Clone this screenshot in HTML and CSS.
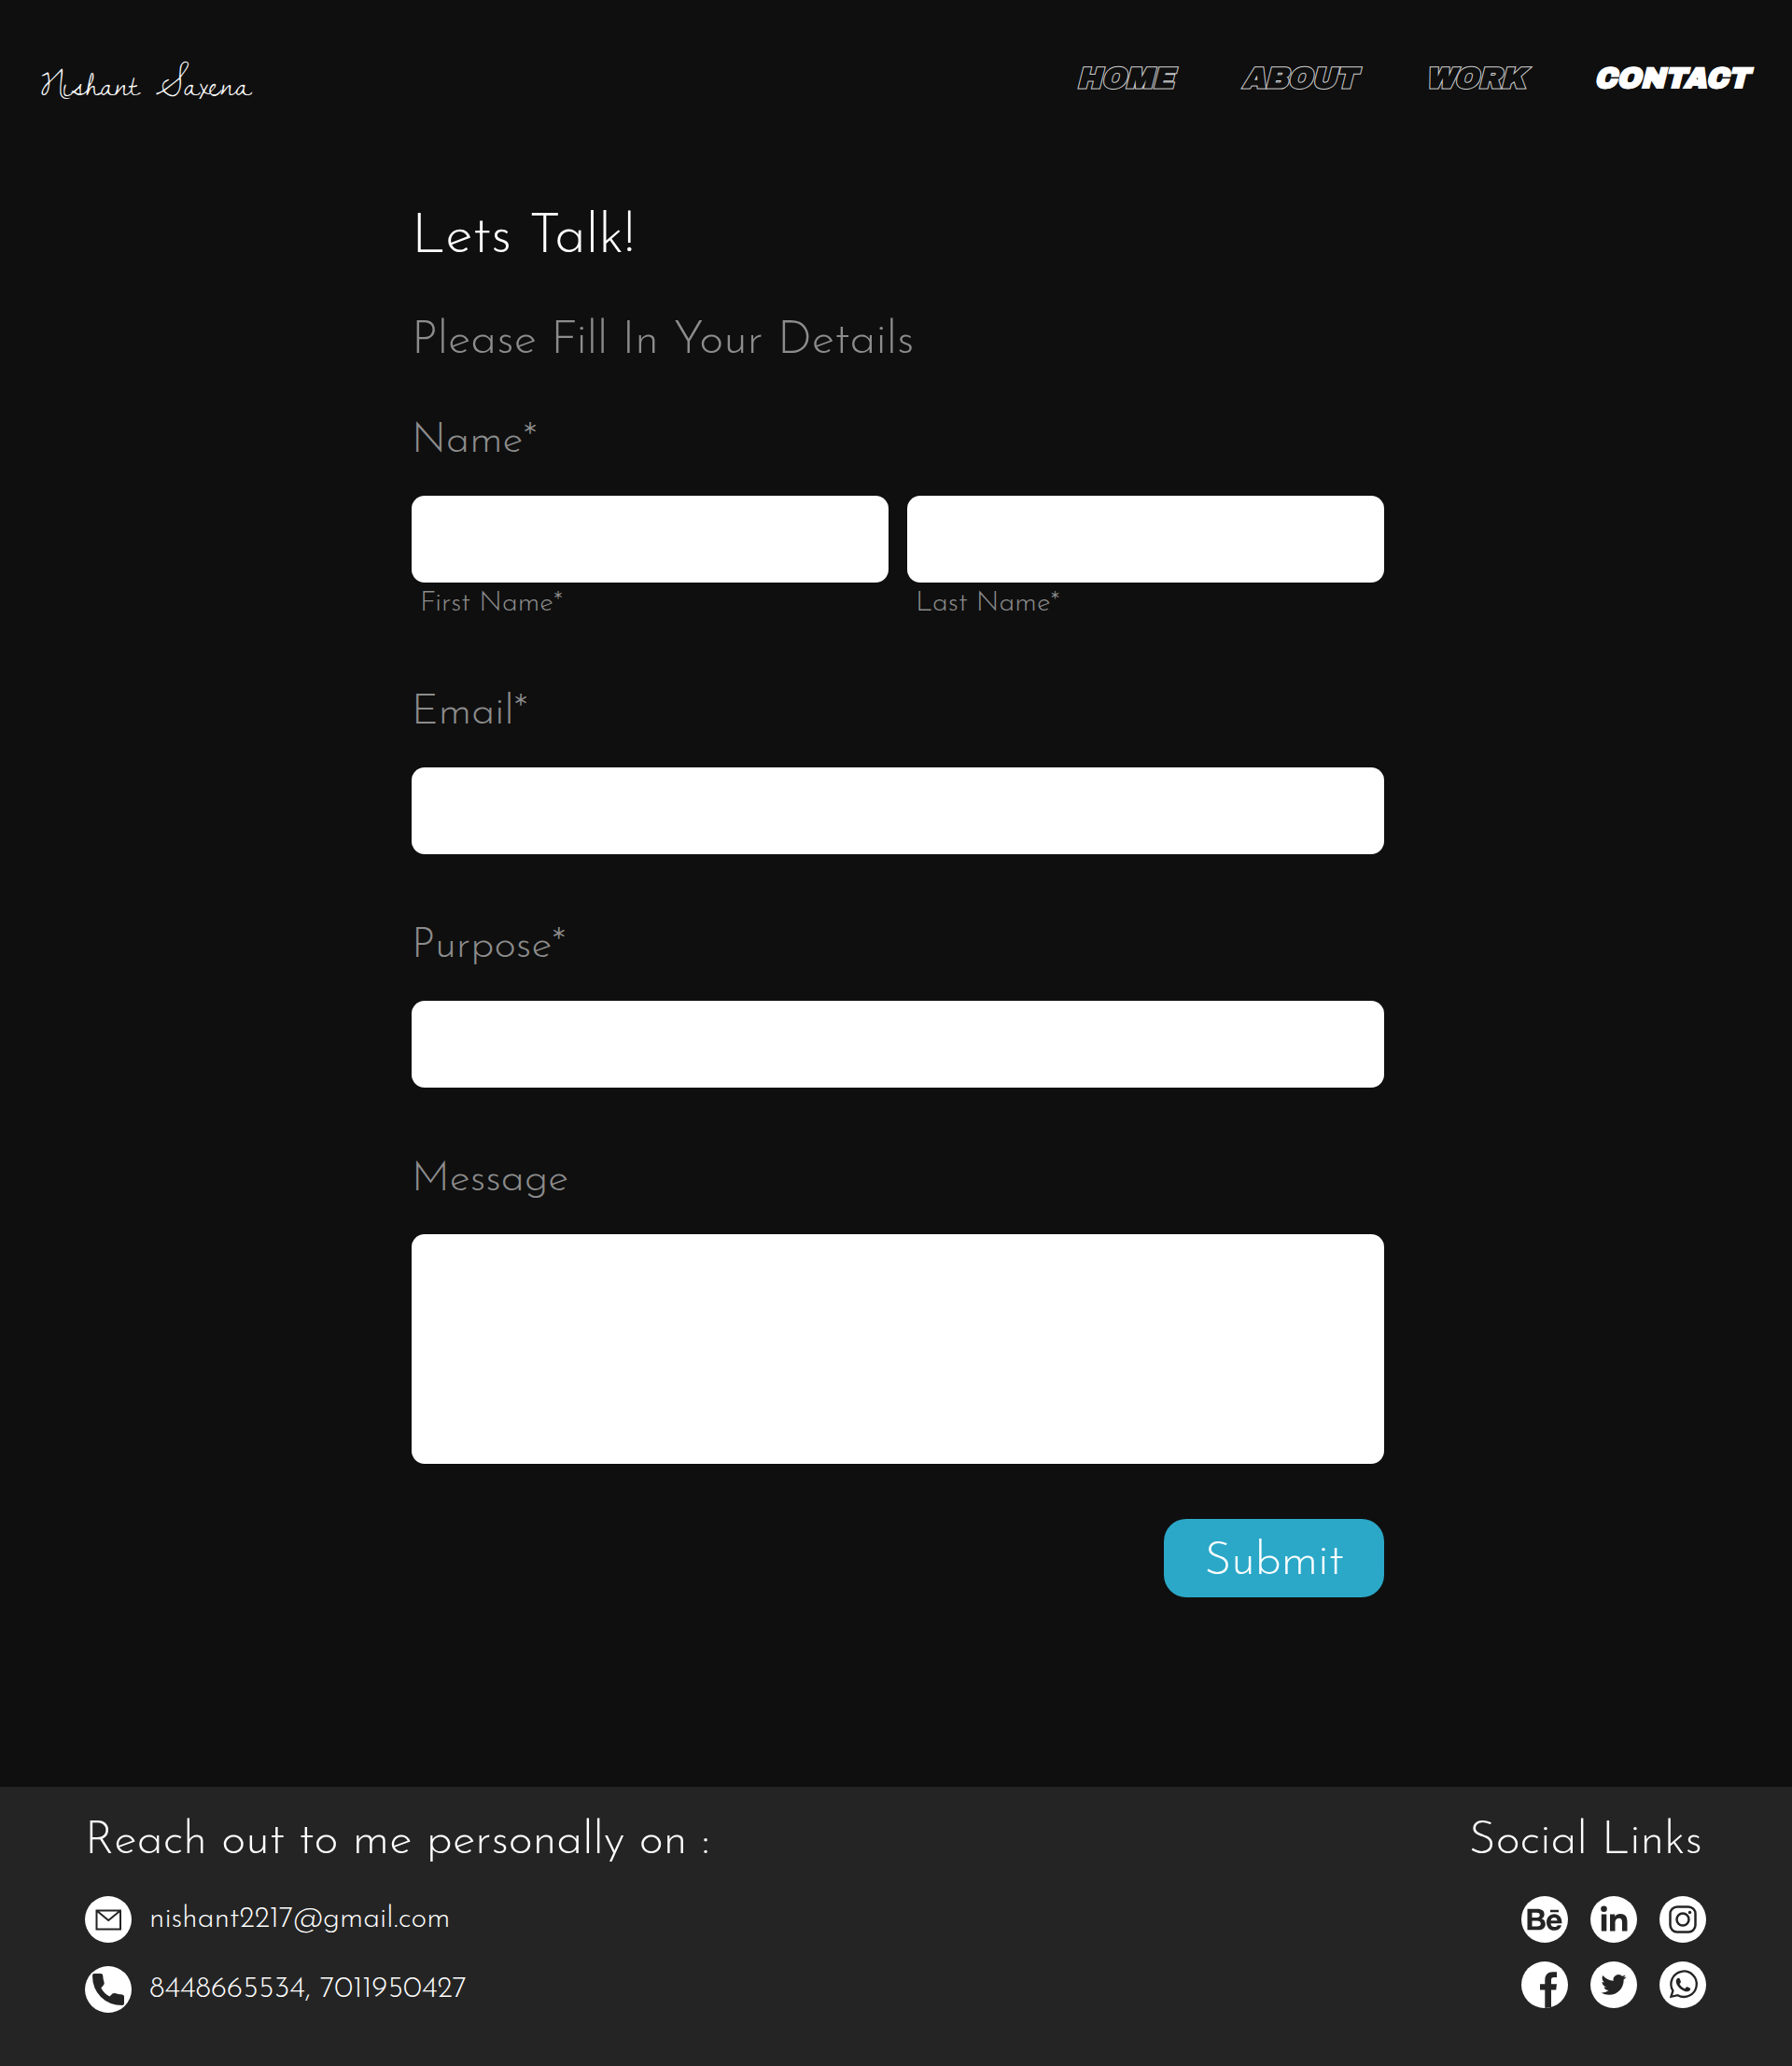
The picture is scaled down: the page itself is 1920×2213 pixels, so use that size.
FILE: index.html
```html
<!DOCTYPE html>
<html lang="en">
<head>
  <meta charset="utf-8">
  <meta name="viewport" content="width=device-width, initial-scale=1">
  <title>Contact – Nishant Saxena</title>
  <link rel="stylesheet" href="styles.css">
</head>
<body>
  <header class="site-header">
    <a class="logo" href="#">Nishant Saxena</a>
    <nav class="nav" aria-label="Main">
      <a class="nav-link" href="#">HOME</a>
      <a class="nav-link" href="#">ABOUT</a>
      <a class="nav-link" href="#">WORK</a>
      <a class="nav-link active" href="#" aria-current="page">CONTACT</a>
    </nav>
  </header>

  <main class="contact">
    <h1 class="title">Lets Talk!</h1>
    <h2 class="subtitle">Please Fill In Your Details</h2>
    <form class="form">
      <fieldset class="field">
        <legend class="label">Name*</legend>
        <div class="name-row">
          <div class="name-part">
            <input class="input" id="first" type="text">
            <label class="hint" for="first">First Name*</label>
          </div>
          <div class="name-part">
            <input class="input" id="last" type="text">
            <label class="hint" for="last">Last Name*</label>
          </div>
        </div>
      </fieldset>
      <div class="field">
        <label class="label" for="email">Email*</label>
        <input class="input" id="email" type="email">
      </div>
      <div class="field">
        <label class="label" for="purpose">Purpose*</label>
        <input class="input" id="purpose" type="text">
      </div>
      <div class="field">
        <label class="label" for="message">Message</label>
        <textarea class="input message" id="message"></textarea>
      </div>
      <button class="submit" type="submit">Submit</button>
    </form>
  </main>

  <footer class="footer">
    <section>
      <h2 class="footer-title">Reach out to me personally on :</h2>
      <ul class="contact-list">
        <li>
          <a class="contact-link" href="mailto:nishant2217@gmail.com">
            <svg class="icon" viewBox="0 0 50 50" aria-hidden="true">
              <circle cx="25" cy="25" r="25" fill="#fff"/>
              <path d="M12.500 15.500H38V35.500H12.500ZM12.500 15.500L25.200 26L38 15.500" fill="none" stroke="#242424" stroke-width="2"/>
            </svg>
            nishant2217@gmail.com
          </a>
        </li>
        <li>
          <a class="contact-link" href="tel:8448665534">
            <svg class="icon" viewBox="0 0 50 50" aria-hidden="true">
              <circle cx="25" cy="25" r="25" fill="#fff"/>
              <path d="M8 10Q8 8 10 8H17Q19 8 19.200 10Q19.400 14 20.600 17.500Q21 19 20 20.200L17.300 23.500Q20.500 29.500 26.500 32.500L29.500 29.500Q30.700 28.600 32 29Q36 30.400 40 30.400Q42 30.600 42 32.500V40Q42 42 40 42Q26 42 17 33Q8 24 8 10Z" fill="#242424"/>
            </svg>
            8448665534, 7011950427
          </a>
        </li>
      </ul>
    </section>

    <section class="social">
      <h2 class="footer-title">Social Links</h2>
      <div class="social-grid">
        <a href="#" aria-label="Behance">
          <svg class="icon" viewBox="0 0 50 50" aria-hidden="true">
            <circle cx="25" cy="25" r="25" fill="#fff"/>
            <path fill="#242424" fill-rule="evenodd" d="M6.500 13.800H17.200C22 13.800 24.600 16 24.600 19.500C24.600 22 23.400 23.400 21.600 24.300C24.300 25.100 25.800 27.200 25.800 30C25.800 34.100 22.600 36.300 18.200 36.300H6.500ZM11.500 17.700V22.900H16.500C18.600 22.900 19.800 22.100 19.800 20.300C19.800 18.400 18.600 17.700 16.500 17.700ZM11.500 26.500V32.500H16.800C19.300 32.500 20.800 31.700 20.800 29.500C20.800 27.400 19.400 26.500 17 26.500ZM31 14.800H40V17.200H31ZM43.400 29.300H31.500C31.700 31.900 33 33.100 35.500 33.100C37 33.100 38.300 32.400 38.800 31.200H43C41.900 34.900 39.200 36.800 35.400 36.800C30.200 36.800 27 33.300 27 28C27 22.900 30.400 19.200 35.300 19.200C40.700 19.200 43.700 23.400 43.400 29.300ZM31.600 26.300H38.700C38.300 24 37.300 22.900 35.200 22.900C33 22.900 31.800 24.400 31.600 26.300Z"/>
          </svg>
        </a>
        <a href="#" aria-label="LinkedIn">
          <svg class="icon" viewBox="0 0 50 50" aria-hidden="true">
            <circle cx="25" cy="25" r="25" fill="#fff"/>
            <circle cx="14.500" cy="13.800" r="3.300" fill="#242424"/>
            <path fill="#242424" d="M11.800 19.500H17.300V37.500H11.800ZM21 19.500H26.300V22C27.300 20.200 29.300 19 32 19C38 19 39.500 22.800 39.500 28V37.500H34V29C34 26 33.600 23.800 30.700 23.800C27.700 23.800 26.500 26 26.500 29V37.500H21Z"/>
          </svg>
        </a>
        <a href="#" aria-label="Instagram">
          <svg class="icon" viewBox="0 0 50 50" aria-hidden="true">
            <circle cx="25" cy="25" r="25" fill="#fff"/>
            <g fill="none" stroke="#242424" stroke-width="2.500">
              <rect x="11.500" y="11.500" width="27" height="27" rx="7.500"/>
              <circle cx="25" cy="25" r="6.500"/>
            </g>
            <circle cx="32.500" cy="17.500" r="1.700" fill="#242424"/>
          </svg>
        </a>
        <a href="#" aria-label="Facebook">
          <svg class="icon" viewBox="0 0 50 50" aria-hidden="true">
            <circle cx="25" cy="25" r="25" fill="#fff"/>
            <path fill="#242424" d="M25.300 50V30.500H20V24.300H25.300V20C25.300 14.500 28.500 11.300 33.500 11.300H38V17H35C32.800 17 32 18.100 32 20.200V24.300H38L37.200 30.500H32V49Z"/>
          </svg>
        </a>
        <a href="#" aria-label="Twitter">
          <svg class="icon" viewBox="0 0 50 50" aria-hidden="true">
            <circle cx="25" cy="25" r="25" fill="#fff"/>
            <path transform="translate(11.500 11.500) scale(1.120)" fill="#242424" d="M23.953 4.570a10 10 0 0 1-2.825.775 4.958 4.958 0 0 0 2.163-2.723c-.951.555-2.005.959-3.127 1.184a4.920 4.920 0 0 0-8.384 4.482C7.690 8.095 4.067 6.130 1.640 3.162a4.822 4.822 0 0 0-.666 2.475c0 1.710.870 3.213 2.188 4.096a4.904 4.904 0 0 1-2.228-.616v.060a4.923 4.923 0 0 0 3.946 4.827 4.996 4.996 0 0 1-2.212.085 4.936 4.936 0 0 0 4.604 3.417 9.867 9.867 0 0 1-6.102 2.105c-.390 0-.779-.023-1.170-.067a13.995 13.995 0 0 0 7.557 2.209c9.053 0 13.998-7.496 13.998-13.985 0-.210 0-.420-.015-.630A9.935 9.935 0 0 0 24 4.590z"/>
          </svg>
        </a>
        <a href="#" aria-label="WhatsApp">
          <svg class="icon" viewBox="0 0 50 50" aria-hidden="true">
            <circle cx="25" cy="25" r="25" fill="#fff"/>
            <path fill="none" stroke="#242424" stroke-width="2.300" d="M12.400 37.800L14.400 31.300A13.700 13.700 0 1 1 19.500 36.200Z"/>
            <path fill="#242424" d="M20.300 17.800C21.300 17.800 21.800 18.300 22.100 19.300L22.900 21.700C23 22.700 22.300 23.300 21.500 24.100C22.800 26.700 24.700 28.300 27.200 29.300L28.700 27.600C29.200 27 29.700 27.100 30.300 27.400L32.600 28.500C33.200 28.900 33.200 29.400 33 30.200C32.200 32 30 32.700 28 32.200C22.500 30.600 18.700 26.600 17.900 22.600C17.500 20.300 18.500 17.800 20.300 17.800Z"/>
          </svg>
        </a>
      </div>
    </section>
  </footer>
</body>
</html>
```
FILE: styles.css
```css
* {
  box-sizing: border-box;
}

body {
  margin: 0;
  min-height: 100vh;
  display: flex;
  flex-direction: column;
  background: #0f0f0f;
  color: #fff;
  font-family: "Josefin Sans", Lato, sans-serif;
  font-weight: 300;
}

a {
  color: inherit;
  text-decoration: none;
}

h1,
h2 {
  margin: 0;
  font-weight: inherit;
}

.site-header {
  display: flex;
  justify-content: space-between;
  align-items: center;
  padding: 54px 46px 0 44px;
}

.logo {
  padding-top: 12px;
  font-family: "Dawning of a New Day", "Mrs Saint Delafield", Lato, cursive;
  font-size: 39px;
  line-height: 48px;
  font-weight: 400;
}

.nav {
  display: flex;
  gap: 74px;
}

.nav-link {
  font-family: "Archivo Black", Inter, sans-serif;
  font-size: 31px;
  line-height: 60px;
  font-weight: 900;
  font-style: italic;
  color: #0f0f0f;
  -webkit-text-stroke: 2px #d0d0d0;
  paint-order: stroke fill;
}

.nav-link.active {
  color: #fff;
  -webkit-text-stroke: 1px #fff;
}

.contact {
  width: 100%;
  max-width: 1090px;
  margin: 0 auto;
  padding: 105px 22px 203px 26px;
  flex-grow: 1;
}

.title {
  font-size: 60px;
  line-height: 72px;
}

.subtitle {
  margin-top: 45px;
  font-size: 50px;
  line-height: 60px;
  color: #8c8c8c;
}

.form {
  display: flex;
  flex-direction: column;
  gap: 73px;
  margin-top: 51px;
}

.field {
  display: flex;
  flex-direction: column;
  gap: 32px;
  margin: 0;
  padding: 0;
  border: 0;
  min-width: 0;
}

.label {
  padding: 0;
  font-size: 45px;
  line-height: 52px;
  color: #8c8c8c;
}

legend.label {
  margin-bottom: 32px;
}

.name-row {
  display: grid;
  grid-template-columns: 1fr 1fr;
  gap: 20px;
}

.name-part {
  display: flex;
  flex-direction: column;
  gap: 5px;
}

.input {
  width: 100%;
  height: 93px;
  padding: 0 20px;
  border: 0;
  border-radius: 14px;
  background: #fff;
  color: #0f0f0f;
  font: inherit;
  font-size: 30px;
}

.message {
  display: block;
  height: 246px;
  padding: 20px;
  resize: none;
}

.hint {
  padding-left: 9px;
  font-size: 30px;
  line-height: 36px;
  color: #8c8c8c;
}

.submit {
  align-self: flex-end;
  width: 236px;
  height: 84px;
  margin-top: -14px;
  padding: 8px 0 0;
  border: 0;
  border-radius: 24px;
  background: #2ba8c8;
  color: #fff;
  font: inherit;
  font-size: 50px;
}

.footer {
  display: flex;
  justify-content: space-between;
  padding: 29px 92px 57px 91px;
  background: #242424;
}

.footer-title {
  font-size: 50px;
  line-height: 60px;
}

.contact-list {
  display: grid;
  gap: 25px;
  margin: 28px 0 0;
  padding: 0;
  list-style: none;
}

.contact-link {
  display: flex;
  align-items: center;
  gap: 19px;
  font-size: 32px;
  line-height: 50px;
}

.icon {
  display: block;
  width: 50px;
  height: 50px;
}

.social {
  display: flex;
  flex-direction: column;
  align-items: flex-end;
}

.social .footer-title {
  padding-right: 4px;
}

.social-grid {
  display: grid;
  grid-template-columns: repeat(3, 50px);
  gap: 20px 24px;
  margin-top: 28px;
}
```
